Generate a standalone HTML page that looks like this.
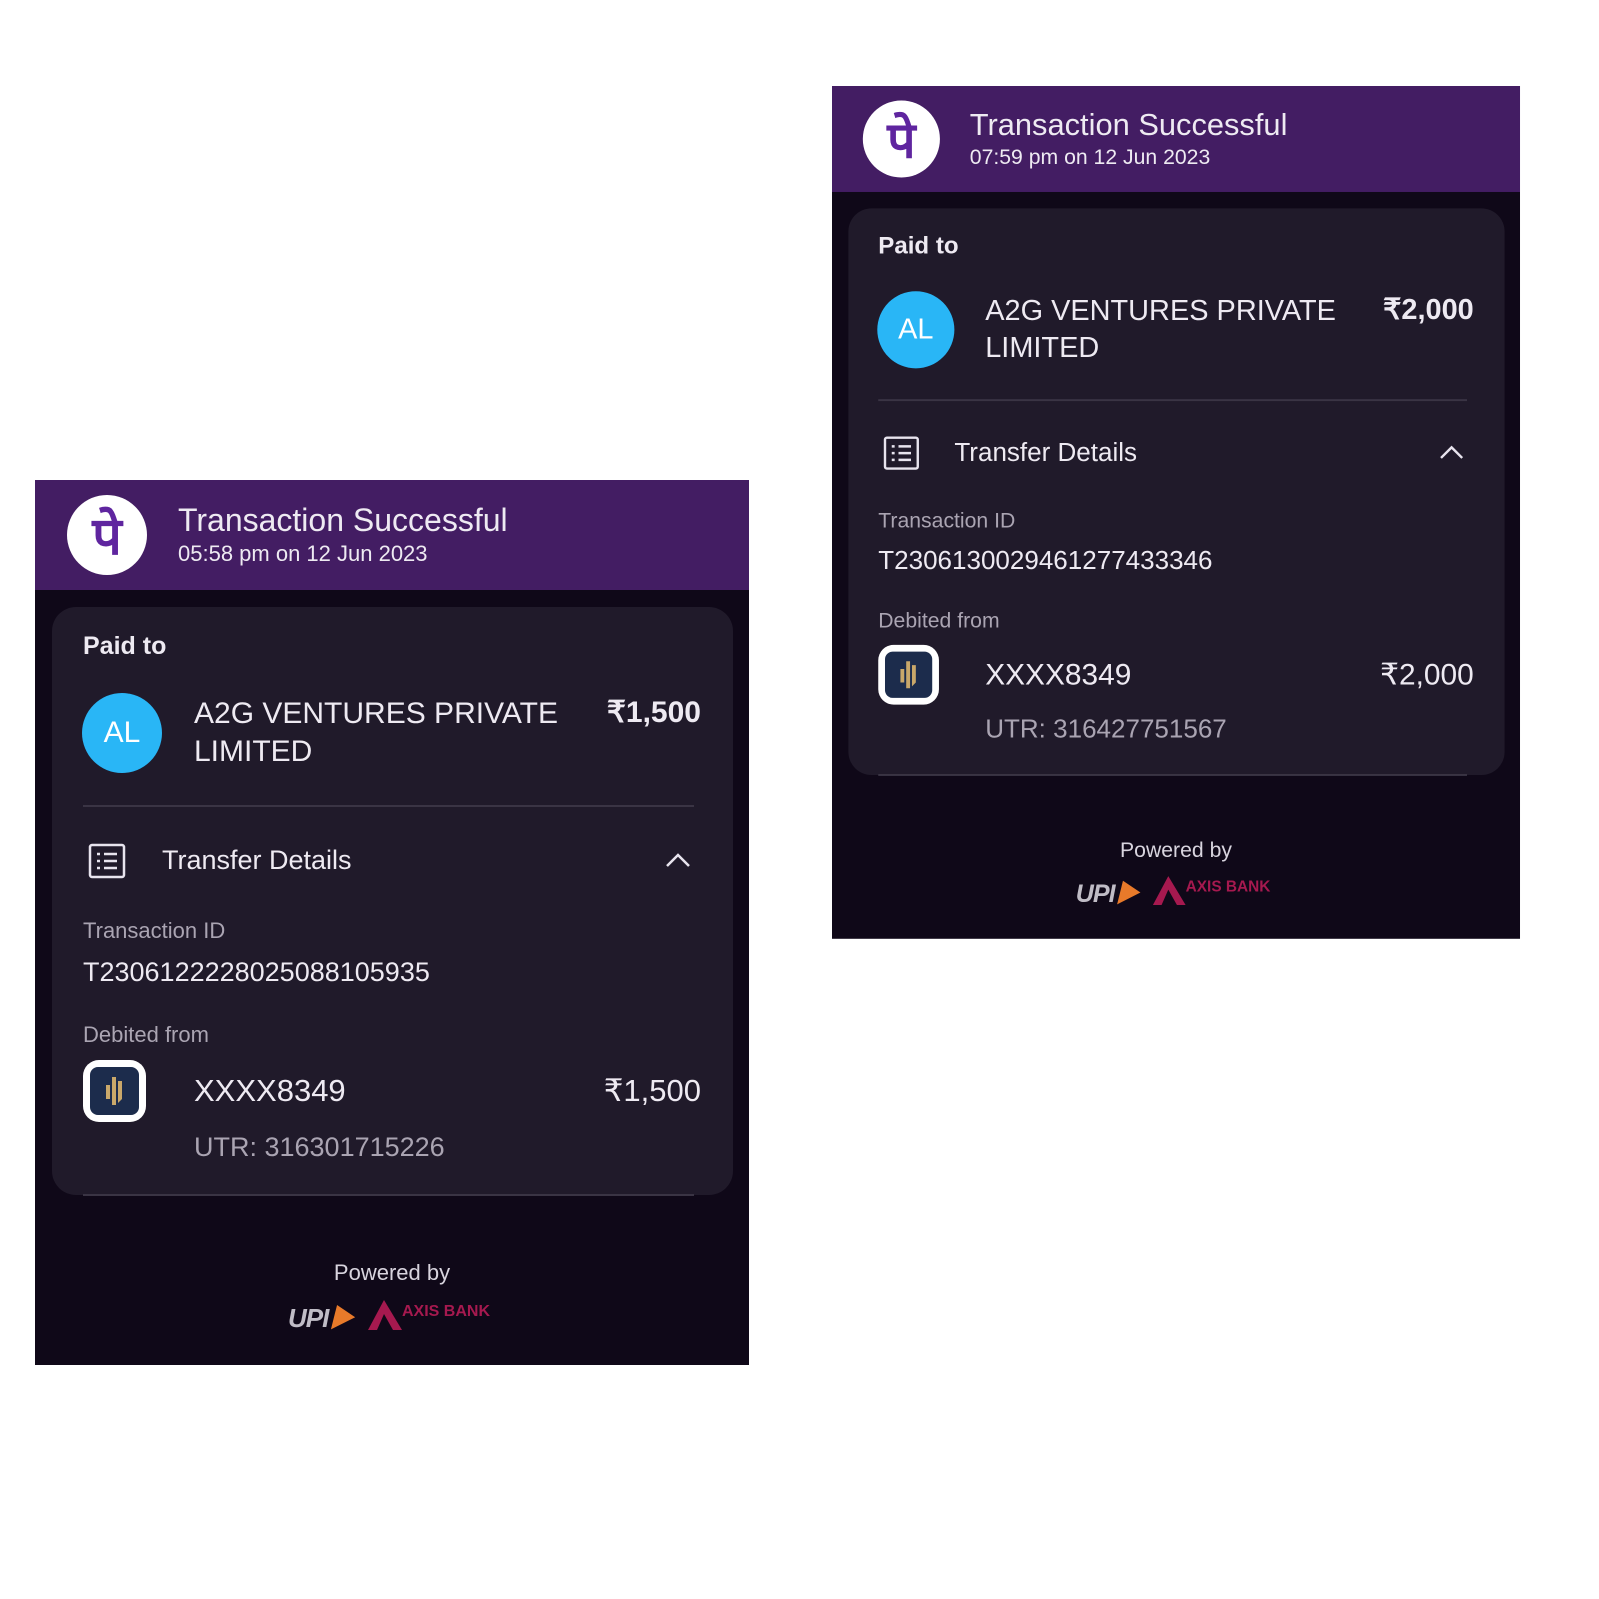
<!DOCTYPE html>
<html><head><meta charset="utf-8"><style>
*{margin:0;padding:0;box-sizing:border-box}
body{width:1599px;height:1599px;background:#fff;position:relative;overflow:hidden;font-family:"Liberation Sans","Noto Sans CJK SC",sans-serif}
.card{position:absolute;width:714px;height:885px;background:#0f0818;transform-origin:0 0;color:#eeeaf2}
.hdr{position:absolute;left:0;top:0;width:714px;height:110px;background:#431d63}
.logo{position:absolute;left:32px;top:15px;width:80px;height:80px;border-radius:50%;background:#fff;color:#5f259f;font-size:52px;font-weight:bold;text-align:center;line-height:84px;font-family:"Liberation Sans","Noto Sans CJK SC",sans-serif}
.t{position:absolute;white-space:nowrap}
.inner{position:absolute;left:17px;top:127px;width:681px;height:588px;background:#201a2a;border-radius:24px}
.al{position:absolute;left:47px;top:213px;width:80px;height:80px;border-radius:50%;background:#29b6f6;color:#fff;font-size:30px;text-align:center;line-height:80px}
.div{position:absolute;left:48px;width:611px;height:2px;background:#3a3444}
.bank{position:absolute;left:48px;top:580px;width:63px;height:62px;border-radius:16px;background:#fff;padding:7px}
.bank div{width:100%;height:100%;background:#1c2c4c;border-radius:8px;position:relative}
.g{color:#aaa4b2}
</style></head><body>

<div class="card" style="left:35px;top:480px">
 <div class="hdr"></div>
 <div class="logo">पे</div>
 <div class="t" style="left:143px;top:22px;font-size:32px">Transaction Successful</div>
 <div class="t" style="left:143px;top:61px;font-size:22px">05:58 pm on 12 Jun 2023</div>
 <div class="inner"></div>
 <div class="t" style="left:48px;top:152px;font-size:25px;font-weight:bold">Paid to</div>
 <div class="al">AL</div>
 <div class="t" style="left:159px;top:215px;font-size:30px;line-height:38px">A2G VENTURES PRIVATE<br>LIMITED</div>
 <div class="t" style="right:48px;top:215px;font-size:30px;font-weight:bold">₹1,500</div>
 <div class="div" style="top:325px"></div>
 <svg class="t" style="left:53px;top:363px" width="38" height="36" viewBox="0 0 38 36" fill="none" stroke="#e8e4ee" stroke-width="2.5"><rect x="2" y="2" width="34" height="32" rx="2"/><path d="M9 11h3M9 18h3M9 25h3M16 11h13M16 18h13M16 25h13"/></svg>
 <div class="t" style="left:127px;top:365px;font-size:27px">Transfer Details</div>
 <svg class="t" style="left:630px;top:372px" width="26" height="16" viewBox="0 0 26 16" fill="none" stroke="#e8e4ee" stroke-width="2.5"><path d="M2 14L13 3l11 11"/></svg>
 <div class="t g" style="left:48px;top:438px;font-size:22px">Transaction ID</div>
 <div class="t" style="left:48px;top:477px;font-size:27px">T2306122228025088105935</div>
 <div class="t g" style="left:48px;top:542px;font-size:22px">Debited from</div>
 <div class="bank"><div><svg style="position:absolute;left:13px;top:7px" width="24" height="34" viewBox="0 0 24 34"><path d="M3 11h4v14H3zM9 3h4v28H9zM15 7h4v18l-4 4z" fill="#c9a86a"/></svg></div></div>
 <div class="t" style="left:159px;top:593px;font-size:31px">XXXX8349</div>
 <div class="t" style="right:48px;top:593px;font-size:31px">₹1,500</div>
 <div class="t g" style="left:159px;top:652px;font-size:27px">UTR: 316301715226</div>
 <div class="div" style="top:714px"></div>
 <div class="t" style="left:0;width:714px;text-align:center;top:780px;font-size:22px;color:#d8d4de">Powered by</div>
 <div class="t" style="left:253px;top:818px;font-size:26px;font-style:italic;font-weight:bold;color:#c0bcc6;letter-spacing:-1px">UPI<span style="color:#e87a2a">▶</span></div>
 <svg class="t" style="left:333px;top:818px" width="36" height="32" viewBox="0 0 36 32"><path d="M0 32L16 2l18 30h-9L16 16 9 32z" fill="#a6194f"/></svg>
 <div class="t" style="left:367px;top:823px;font-size:16px;font-weight:bold;color:#a6194f">AXIS BANK</div>
</div>

<div class="card" style="left:832px;top:86px;transform:scale(0.9636)">
 <div class="hdr"></div>
 <div class="logo">पे</div>
 <div class="t" style="left:143px;top:22px;font-size:32px">Transaction Successful</div>
 <div class="t" style="left:143px;top:61px;font-size:22px">07:59 pm on 12 Jun 2023</div>
 <div class="inner"></div>
 <div class="t" style="left:48px;top:152px;font-size:25px;font-weight:bold">Paid to</div>
 <div class="al">AL</div>
 <div class="t" style="left:159px;top:215px;font-size:30px;line-height:38px">A2G VENTURES PRIVATE<br>LIMITED</div>
 <div class="t" style="right:48px;top:215px;font-size:30px;font-weight:bold">₹2,000</div>
 <div class="div" style="top:325px"></div>
 <svg class="t" style="left:53px;top:363px" width="38" height="36" viewBox="0 0 38 36" fill="none" stroke="#e8e4ee" stroke-width="2.5"><rect x="2" y="2" width="34" height="32" rx="2"/><path d="M9 11h3M9 18h3M9 25h3M16 11h13M16 18h13M16 25h13"/></svg>
 <div class="t" style="left:127px;top:365px;font-size:27px">Transfer Details</div>
 <svg class="t" style="left:630px;top:372px" width="26" height="16" viewBox="0 0 26 16" fill="none" stroke="#e8e4ee" stroke-width="2.5"><path d="M2 14L13 3l11 11"/></svg>
 <div class="t g" style="left:48px;top:438px;font-size:22px">Transaction ID</div>
 <div class="t" style="left:48px;top:477px;font-size:27px">T2306130029461277433346</div>
 <div class="t g" style="left:48px;top:542px;font-size:22px">Debited from</div>
 <div class="bank"><div><svg style="position:absolute;left:13px;top:7px" width="24" height="34" viewBox="0 0 24 34"><path d="M3 11h4v14H3zM9 3h4v28H9zM15 7h4v18l-4 4z" fill="#c9a86a"/></svg></div></div>
 <div class="t" style="left:159px;top:593px;font-size:31px">XXXX8349</div>
 <div class="t" style="right:48px;top:593px;font-size:31px">₹2,000</div>
 <div class="t g" style="left:159px;top:652px;font-size:27px">UTR: 316427751567</div>
 <div class="div" style="top:714px"></div>
 <div class="t" style="left:0;width:714px;text-align:center;top:780px;font-size:22px;color:#d8d4de">Powered by</div>
 <div class="t" style="left:253px;top:818px;font-size:26px;font-style:italic;font-weight:bold;color:#c0bcc6;letter-spacing:-1px">UPI<span style="color:#e87a2a">▶</span></div>
 <svg class="t" style="left:333px;top:818px" width="36" height="32" viewBox="0 0 36 32"><path d="M0 32L16 2l18 30h-9L16 16 9 32z" fill="#a6194f"/></svg>
 <div class="t" style="left:367px;top:823px;font-size:16px;font-weight:bold;color:#a6194f">AXIS BANK</div>
</div>

</body></html>
